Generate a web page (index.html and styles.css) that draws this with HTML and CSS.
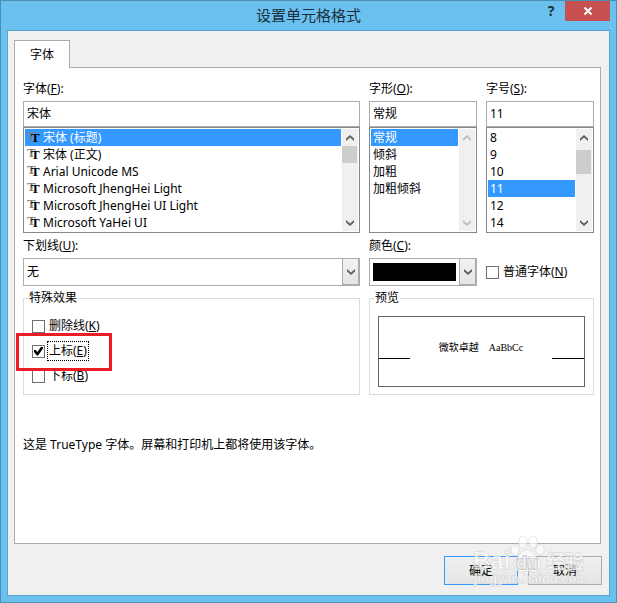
FILE: index.html
```html
<!DOCTYPE html>
<html lang="zh-CN">
<head>
<meta charset="utf-8">
<meta name="viewport" content="width=device-width, initial-scale=1">
<title>设置单元格格式</title>
<link rel="stylesheet" href="styles.css">
</head>
<body>
<svg class="defs" aria-hidden="true">
  <symbol id="up" viewBox="0 0 8 6"><path d="M0 6V3.500L4 0L8 3.500V6L4 2.500Z"/></symbol>
  <symbol id="down" viewBox="0 0 8 6"><path d="M0 0V2.500L4 6L8 2.500V0L4 3.500Z"/></symbol>
</svg>
<form class="window">
  <header class="titlebar">
    <h1 class="title">设置单元格格式</h1>
    <div class="window-buttons">
      <button type="button" class="help">?</button>
      <button type="button" class="close" aria-label="关闭"><svg viewBox="0 0 10 8"><path d="M1.500 0.500L8.500 7.500M8.500 0.500L1.500 7.500"/></svg></button>
    </div>
  </header>
  <main class="client">
    <div class="tabs" role="tablist"><button type="button" class="tab" role="tab" aria-selected="true">字体</button></div>
    <section class="panel">
      <div class="columns">
        <div class="field">
          <label for="font">字体(<u>F</u>):</label>
          <input id="font" class="text" type="text" value="宋体">
          <div class="listbox">
            <ul role="listbox" aria-label="字体">
              <li role="option" aria-selected="true"><span class="tt" aria-hidden="true"></span>宋体 (标题)</li>
              <li role="option"><span class="tt" aria-hidden="true"></span>宋体 (正文)</li>
              <li role="option"><span class="tt" aria-hidden="true"></span>Arial Unicode MS</li>
              <li role="option"><span class="tt" aria-hidden="true"></span>Microsoft JhengHei Light</li>
              <li role="option"><span class="tt" aria-hidden="true"></span>Microsoft JhengHei UI Light</li>
              <li role="option"><span class="tt" aria-hidden="true"></span>Microsoft YaHei UI</li>
            </ul>
            <div class="scrollbar">
              <button type="button" aria-label="向上滚动"><svg class="arrow"><use href="#up"/></svg></button>
              <div class="track"><div class="thumb"></div></div>
              <button type="button" aria-label="向下滚动"><svg class="arrow"><use href="#down"/></svg></button>
            </div>
          </div>
        </div>
        <div class="field">
          <label for="style">字形(<u>O</u>):</label>
          <input id="style" class="text" type="text" value="常规">
          <div class="listbox">
            <ul role="listbox" aria-label="字形">
              <li role="option" aria-selected="true">常规</li>
              <li role="option">倾斜</li>
              <li role="option">加粗</li>
              <li role="option">加粗倾斜</li>
            </ul>
            <div class="scrollbar">
              <button type="button" disabled aria-label="向上滚动"><svg class="arrow"><use href="#up"/></svg></button>
              <div class="track"></div>
              <button type="button" disabled aria-label="向下滚动"><svg class="arrow"><use href="#down"/></svg></button>
            </div>
          </div>
        </div>
        <div class="field">
          <label for="size">字号(<u>S</u>):</label>
          <input id="size" class="text" type="text" value="11">
          <div class="listbox">
            <ul role="listbox" aria-label="字号">
              <li role="option">8</li>
              <li role="option">9</li>
              <li role="option">10</li>
              <li role="option" aria-selected="true">11</li>
              <li role="option">12</li>
              <li role="option">14</li>
            </ul>
            <div class="scrollbar">
              <button type="button" aria-label="向上滚动"><svg class="arrow"><use href="#up"/></svg></button>
              <div class="track size-track"><div class="thumb size-thumb"></div></div>
              <button type="button" aria-label="向下滚动"><svg class="arrow"><use href="#down"/></svg></button>
            </div>
          </div>
        </div>
      </div>

      <div class="columns second">
        <div class="field">
          <label for="underline">下划线(<u>U</u>):</label>
          <div class="combo">
            <select id="underline"><option>无</option></select>
            <span class="combo-arrow"><svg class="arrow"><use href="#down"/></svg></span>
          </div>
        </div>
        <div class="field">
          <label for="color">颜色(<u>C</u>):</label>
          <div class="combo">
            <select id="color" class="color"><option value="#000000" aria-label="黑色"></option></select>
            <span class="combo-arrow"><svg class="arrow"><use href="#down"/></svg></span>
          </div>
        </div>
        <label class="check normal"><input type="checkbox"><span>普通字体(<u>N</u>)</span></label>
      </div>

      <div class="columns third">
        <fieldset class="group">
          <legend>特殊效果</legend>
          <div class="effects">
            <label class="check"><input type="checkbox"><span>删除线(<u>K</u>)</span></label>
            <label class="check focused"><input type="checkbox" checked><span>上标(<u>E</u>)</span></label>
            <label class="check"><input type="checkbox"><span>下标(<u>B</u>)</span></label>
          </div>
          <div class="highlight"></div>
        </fieldset>
        <fieldset class="group preview">
          <legend>预览</legend>
          <div class="sample">
            <span class="baseline"></span>
            <p>微软卓越　AaBbCc</p>
            <span class="baseline"></span>
          </div>
        </fieldset>
      </div>
      <p class="note">这是 TrueType 字体。屏幕和打印机上都将使用该字体。</p>
    </section>
    <footer class="actions">
      <button type="submit" class="action default">确定</button>
      <button type="button" class="action">取消</button>
      <svg class="watermark" viewBox="0 0 116 56" role="img" aria-label="Baidu 经验">
        <g class="mark">
          <text x="1" y="34" class="brand">Bai</text>
          <ellipse cx="43" cy="15" rx="4" ry="5"/>
          <ellipse cx="51" cy="7" rx="4" ry="6"/>
          <ellipse cx="61" cy="7" rx="4" ry="6"/>
          <ellipse cx="68" cy="15" rx="4" ry="5"/>
          <path d="M55 15C49 15 48 20 44 24C40 28 42 37 49 37C52 37 53 36 55 36C58 36 60 37 63 37C70 36 70 28 66 24C62 20 61 15 55 15Z"/>
          <text x="74" y="34" class="product">经验</text>
          <text x="2" y="48" class="url">jingyan.baidu.com</text>
          <text x="44" y="34" class="du">du</text>
        </g>
      </svg>
    </footer>
  </main>
</form>
</body>
</html>
```
FILE: styles.css
```css
* { box-sizing: border-box; }

body {
  margin: 0;
  font: 12px/16px "Noto Sans", "Noto Sans CJK SC", sans-serif;
  color: #000;
}

button, input, select {
  font: inherit;
  color: inherit;
  margin: 0;
  border-radius: 0;
}

p, h1, ul, fieldset { margin: 0; padding: 0; }
svg { display: block; }
.defs { position: absolute; width: 0; height: 0; }

.window {
  display: flex;
  flex-direction: column;
  min-height: 100vh;
  padding: 0 6px 6px;
  border: 1px solid #4c8fb5;
  background: #6ac1ef;
}

.titlebar {
  display: grid;
  grid-template-columns: 1fr auto 1fr;
  height: 29px;
}

.title {
  grid-column: 2;
  font-size: 15px;
  line-height: 28px;
  font-weight: 400;
  color: #1c303b;
}

.window-buttons {
  display: flex;
  justify-content: flex-end;
  align-items: flex-start;
}

.help {
  width: 28px;
  height: 20px;
  padding: 0;
  border: 0;
  background: none;
  font-size: 14px;
  line-height: 20px;
  font-weight: 700;
  color: #1c303b;
}

.close {
  display: grid;
  place-items: center;
  width: 45px;
  height: 20px;
  padding: 0;
  border: 0;
  background: #c75050;
}

.close svg {
  width: 10px;
  height: 8px;
  fill: none;
  stroke: #fff;
  stroke-width: 2;
}

.client {
  flex: 1;
  display: flex;
  flex-direction: column;
  padding: 9px 8px 10px 6px;
  border: 1px solid #5aa5cd;
  background: #f0f0f0;
}

.tabs { display: flex; }

.tab {
  position: relative;
  z-index: 1;
  width: 56px;
  height: 28px;
  margin-bottom: -1px;
  padding: 0;
  border: 1px solid #acacac;
  border-bottom: 0;
  background: #fff;
}

.panel {
  flex: 1;
  padding: 12px 6px 12px 8px;
  border: 1px solid #acacac;
  background: #fff;
}

.columns {
  display: grid;
  grid-template-columns: 337fr 108fr 108fr;
  gap: 9px;
}

.field {
  display: flex;
  flex-direction: column;
  min-width: 0;
}

.field > label {
  height: 21px;
  line-height: 18px;
}

.text {
  width: 100%;
  height: 26px;
  padding: 0 3px 2px;
  border: 1px solid #acacac;
  background: #fff;
}

.listbox {
  display: flex;
  height: 106px;
  padding: 1px;
  border: 1px solid #828790;
  background: #fff;
}

.listbox ul {
  flex: 1;
  min-width: 0;
  list-style: none;
}

.listbox li {
  display: flex;
  align-items: center;
  gap: 3px;
  height: 17px;
  padding: 0 2px;
  white-space: nowrap;
}

[aria-selected="true"][role="option"] {
  background: #3399ff;
  color: #fff;
}

.tt {
  display: flex;
  width: 13px;
  height: 17px;
  font: 700 13px/13px "Liberation Serif", serif;
}
.tt::before {
  content: "T";
  width: 4px;
  color: #808080;
}
.tt::after {
  content: "T";
  padding-top: 2px;
  color: #000;
}

.scrollbar {
  display: flex;
  flex-direction: column;
  width: 16px;
  margin-left: 1px;
  background: #f0f0f0;
}

.scrollbar button {
  display: grid;
  place-items: center;
  height: 17px;
  padding: 0;
  border: 0;
  background: none;
}

.arrow { width: 8px; height: 6px; fill: #606060; }
button:disabled .arrow { fill: #bfbfbf; }
.track { flex: 1; padding-right: 1px; }
.thumb { height: 17px; background: #cdcdcd; }
.size-track { padding-top: 4px; }
.size-thumb { height: 24px; }

.second { margin-top: 4px; align-items: end; }

.combo { position: relative; }

.combo select {
  appearance: none;
  display: block;
  width: 100%;
  height: 28px;
  padding: 0 20px 0 3px;
  border: 1px solid #acacac;
  background: #fff;
}

.combo .color {
  padding: 4px 20px 4px 3px;
  background: #000 content-box;
}

.combo-arrow {
  position: absolute;
  inset: 0 0 0 auto;
  display: grid;
  place-items: center;
  width: 18px;
  border: 1px solid #acacac;
  border-right-width: 2px;
  border-bottom-width: 2px;
  background: linear-gradient(#f2f2f2, #e4e4e4);
  pointer-events: none;
}

.check {
  display: flex;
  align-items: center;
  gap: 4px;
  height: 20px;
  white-space: nowrap;
}

.check input {
  appearance: none;
  position: relative;
  width: 13px;
  height: 13px;
  border: 1px solid #707070;
  background: #fff;
}

.check input:checked::after {
  content: "";
  position: absolute;
  inset: 1px;
  background: #000;
  clip-path: polygon(0 40%, 20% 40%, 38% 60%, 80% 0, 100% 0, 100% 22%, 45% 100%, 32% 100%, 0 62%);
}

.check.normal { height: 28px; }

.focused span { outline: 1px dotted #000; outline-offset: 1px; }

.third { grid-template-columns: 337fr 225fr; margin-top: 4px; }

.group {
  position: relative;
  min-width: 0;
  height: 105px;
  border: 1px solid #dcdcdc;
}

.group legend { margin-left: 4px; padding: 0 1px; line-height: 16px; }

.effects {
  display: flex;
  flex-direction: column;
  align-items: flex-start;
  gap: 5px;
  padding: 10px 8px 0;
}

.highlight {
  position: absolute;
  left: -8px;
  top: 27px;
  width: 96px;
  height: 38px;
  border: 3px solid #ed1c24;
  pointer-events: none;
}

.sample {
  display: grid;
  grid-template-columns: 31fr 143fr 32fr;
  align-items: center;
  height: 71px;
  margin: 10px 8px 0;
  border: 1px solid #646464;
}

.sample p {
  padding-bottom: 8px;
  text-align: center;
  font: 10px/16px "Liberation Serif", "Noto Sans CJK SC", serif;
  white-space: nowrap;
}

.baseline { height: 1px; margin-top: 14px; background: #000; }

.note { margin-top: 42px; line-height: 16px; }

.actions {
  position: relative;
  display: flex;
  justify-content: flex-end;
  gap: 10px;
  margin-right: -1px;
  padding-top: 12px;
}

.action {
  width: 74px;
  height: 29px;
  padding: 0;
  border: 1px solid #acacac;
  background: linear-gradient(#f0f0f0, #e5e5e5);
}

.action.default { border-color: #3399ff; }

.watermark {
  position: absolute;
  right: 14px;
  bottom: -6px;
  width: 116px;
  height: 56px;
  pointer-events: none;
}

.mark {
  fill: #fff;
  fill-opacity: 0.6;
  stroke: #c8c8c8;
  stroke-opacity: 0.7;
  stroke-width: 1;
  paint-order: stroke;
}

.brand { font: 700 24px "Liberation Sans", sans-serif; }
.product { font: 700 19px "Noto Sans CJK SC", sans-serif; }
.url { font: 700 13px "Liberation Sans", sans-serif; }
.du { font: 700 18px "Liberation Sans", sans-serif; stroke: #b8b8b8; stroke-width: 2; }
```
